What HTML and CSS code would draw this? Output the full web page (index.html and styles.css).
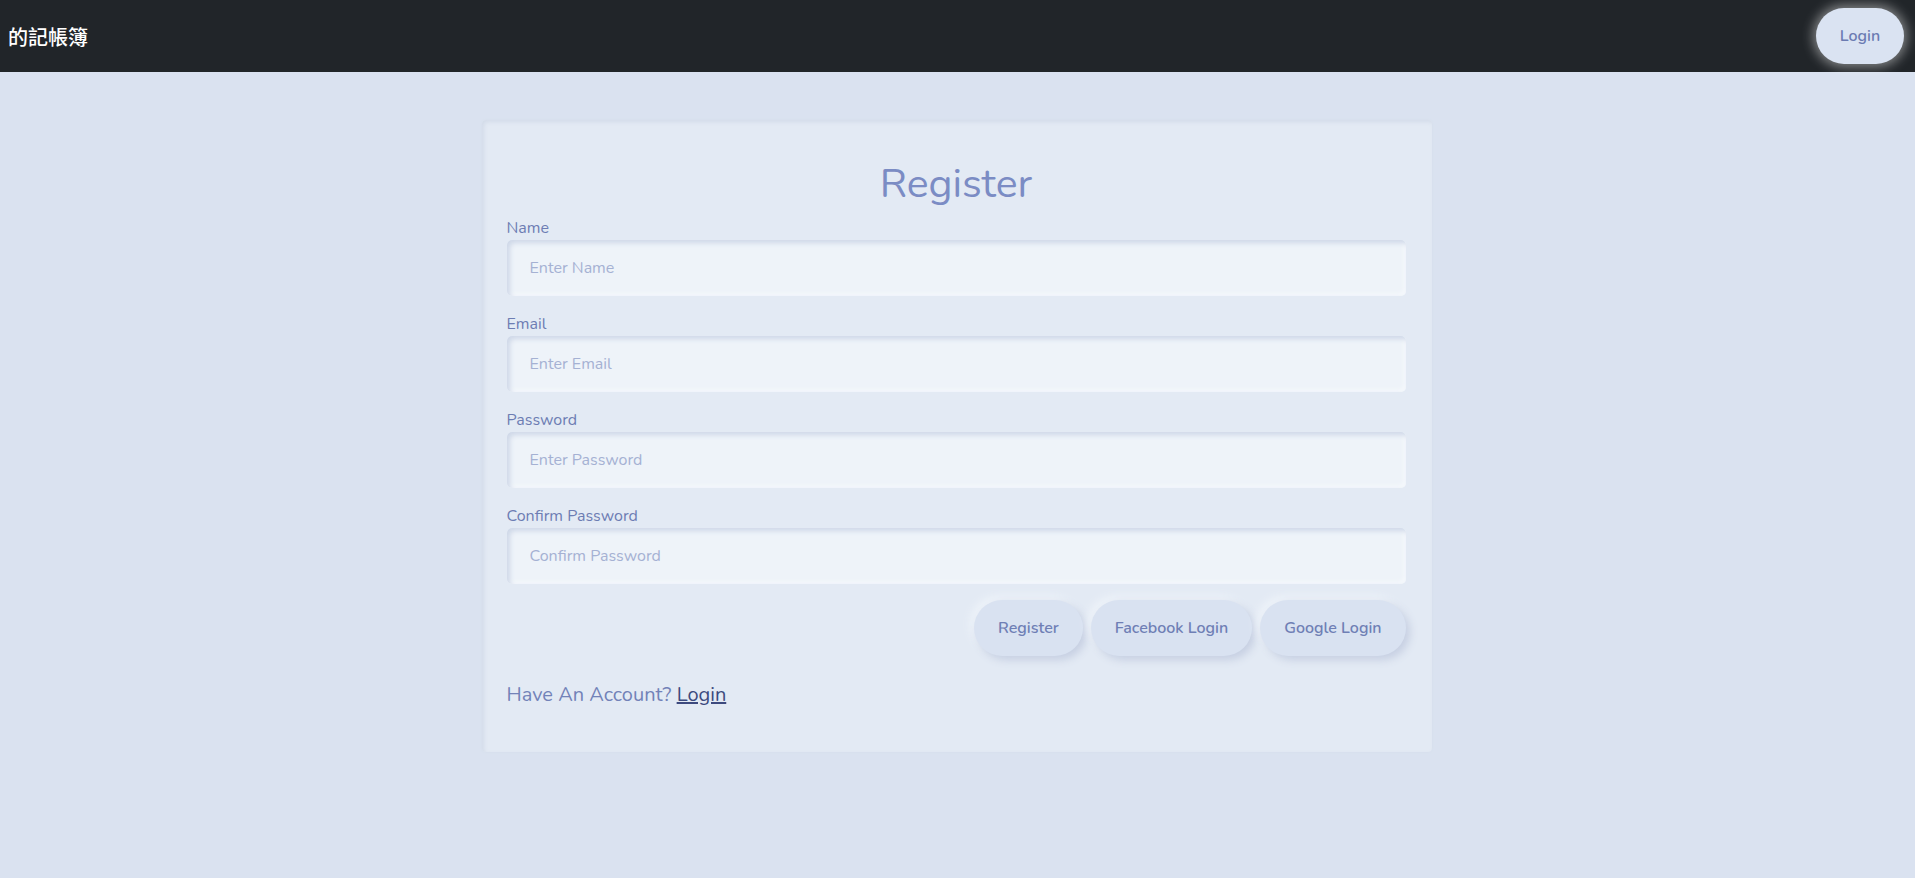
FILE: index.html
```html
<!DOCTYPE html>
<html lang="zh-Hant">
<head>
    <meta charset="UTF-8">
    <meta name="viewport" content="width=device-width, initial-scale=1.0">
    <title>Register</title>
    <link rel="stylesheet" href="styles.css">
</head>
<body>
    <nav class="navbar">
        <a class="brand" href="#">的記帳簿</a>
        <button class="nav-button">Login</button>
    </nav>
    <main>
        <form class="card">
            <h1 class="card-title">Register</h1>
            <div class="field">
                <label for="name">Name</label>
                <input type="text" id="name" placeholder="Enter Name">
            </div>
            <div class="field">
                <label for="email">Email</label>
                <input type="email" id="email" placeholder="Enter Email">
            </div>
            <div class="field">
                <label for="password">Password</label>
                <input type="password" id="password" placeholder="Enter Password">
            </div>
            <div class="field">
                <label for="confirm">Confirm Password</label>
                <input type="password" id="confirm" placeholder="Confirm Password">
            </div>
            <div class="actions">
                <button type="button" class="button">Register</button>
                <button type="button" class="button">Facebook Login</button>
                <button type="button" class="button">Google Login</button>
            </div>
            <p class="switch">Have An Account? <a href="#">Login</a></p>
        </form>
    </main>
</body>
</html>
```

FILE: styles.css
```css
* {
    margin: 0;
    padding: 0;
    box-sizing: border-box;
}

body {
    background-color: #dae2f0;
    color: #7282b8;
    font-family: 'Nunito', 'Lato', 'Open Sans', sans-serif;
    min-height: 100vh;
}

.navbar {
    background-color: #212529;
    height: 72px;
    display: flex;
    justify-content: space-between;
    align-items: center;
    padding: 0 11px 0 8px;
}

    .navbar .brand {
        color: #ffffff;
        font-family: 'Noto Sans CJK TC', 'Noto Sans', sans-serif;
        font-size: 20px;
        font-weight: 500;
        text-decoration: none;
    }

.nav-button {
    width: 88px;
    height: 56px;
    border: none;
    border-radius: 28px;
    background-color: #dae3f2;
    color: #6b7bb2;
    font-family: inherit;
    font-size: 16px;
    font-weight: 600;
    box-shadow: 0 0 12px 3px rgba(255, 255, 255, 0.45);
    cursor: pointer;
}

main {
    display: flex;
    justify-content: center;
    padding: 48px 2px 0 0;
}

.card {
    width: 950px;
    background-color: #e3eaf4;
    border-radius: 4px;
    padding: 39px 26px 43px 25px;
    box-shadow: inset 2px 2px 4px #d3dbe9, 0 0 2px #d5dde9;
}

.card-title {
    font-size: 41px;
    font-weight: 400;
    line-height: 50px;
    text-align: center;
    color: #7b8cc4;
    margin-bottom: 9px;
}

.field {
    display: flex;
    flex-direction: column;
    gap: 2px;
    margin-bottom: 18px;
}

    .field label {
        font-size: 16px;
        line-height: 20px;
        color: #6d7db3;
    }

    .field input {
        height: 56px;
        border: none;
        outline: none;
        border-radius: 5px;
        background-color: #eef3f9;
        padding: 0 23px;
        font-family: inherit;
        font-size: 16px;
        color: #6d7db3;
        box-shadow: inset 3px 3px 5px #cfd8e8, inset -2px -2px 4px #f6f9fc;
    }

        .field input::placeholder {
            color: #a5b1d3;
        }

.actions {
    display: flex;
    justify-content: flex-end;
    gap: 8px;
    margin-top: -2px;
}

.button {
    height: 56px;
    padding: 0 24px;
    border: none;
    border-radius: 28px;
    background-color: #d9e2f1;
    color: #6f7fb5;
    font-family: inherit;
    font-size: 16px;
    font-weight: 600;
    cursor: pointer;
    box-shadow: 4px 4px 8px #c6cfe2, -4px -4px 8px #eef3f9;
}

.switch {
    margin-top: 25px;
    font-size: 20px;
    line-height: 28px;
    color: #7282b8;
}

    .switch a {
        color: #3d4a7e;
    }
```
